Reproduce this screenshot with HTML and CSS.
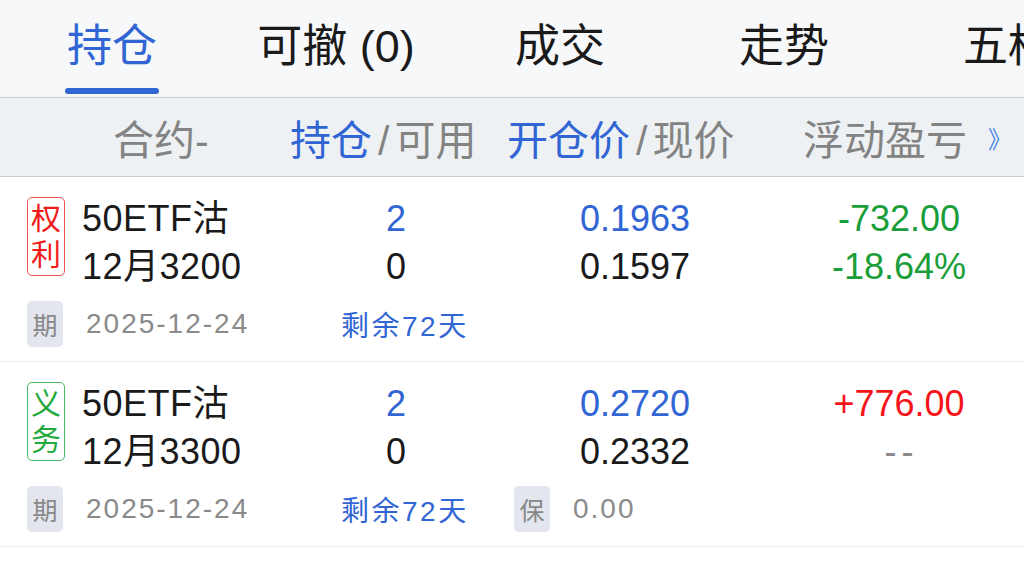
FILE: index.html
```html
<!DOCTYPE html>
<html lang="zh-CN">
<head>
    <meta charset="UTF-8">
    <meta name="viewport" content="width=device-width, initial-scale=1.0">
    <title>持仓</title>
    <link rel="stylesheet" href="styles.css">
</head>
<body>
    <!-- Tabs -->
    <nav class="tabs">
        <div class="tab active"><span class="tab-label">持仓</span><span class="tab-line"></span></div>
        <div class="tab"><span class="tab-label">可撤 (0)</span></div>
        <div class="tab"><span class="tab-label">成交</span></div>
        <div class="tab"><span class="tab-label">走势</span></div>
        <div class="tab"><span class="tab-label">五档</span></div>
    </nav>

    <!-- Column header -->
    <div class="thead">
        <div class="th th-name">合约-</div>
        <div class="th"><span class="blue">持仓</span><span class="slash">/</span>可用</div>
        <div class="th"><span class="blue">开仓价</span><span class="slash">/</span>现价</div>
        <div class="th th-last"><span>浮动盈亏</span><span class="more">》</span></div>
    </div>

    <!-- Positions -->
    <div class="pos">
        <div class="pos-main">
            <div class="col-name">
                <span class="tag tag-right">权<br>利</span>
                <div class="name">
                    <div>50ETF沽</div>
                    <div>12月3200</div>
                </div>
            </div>
            <div class="col-num"><div class="blue">2</div><div>0</div></div>
            <div class="col-num"><div class="blue">0.1963</div><div>0.1597</div></div>
            <div class="col-num"><div class="green">-732.00</div><div class="green">-18.64%</div></div>
        </div>
        <div class="pos-sub">
            <div class="sub-cell sub-first"><span class="badge">期</span><span class="sub-val">2025-12-24</span></div>
            <div class="sub-cell sub-days"><span class="days">剩余72天</span></div>
            <div class="sub-cell"></div>
        </div>
    </div>

    <div class="pos">
        <div class="pos-main">
            <div class="col-name">
                <span class="tag tag-duty">义<br>务</span>
                <div class="name">
                    <div>50ETF沽</div>
                    <div>12月3300</div>
                </div>
            </div>
            <div class="col-num"><div class="blue">2</div><div>0</div></div>
            <div class="col-num"><div class="blue">0.2720</div><div>0.2332</div></div>
            <div class="col-num"><div class="red">+776.00</div><div class="dash">--</div></div>
        </div>
        <div class="pos-sub">
            <div class="sub-cell sub-first"><span class="badge">期</span><span class="sub-val">2025-12-24</span></div>
            <div class="sub-cell sub-days"><span class="days">剩余72天</span></div>
            <div class="sub-cell sub-margin"><span class="badge">保</span><span class="sub-val">0.00</span></div>
        </div>
    </div>
</body>
</html>
```

FILE: styles.css
```css
body {
    margin: 0;
    padding: 0;
    background: #ffffff;
    font-family: "Liberation Sans", "Noto Sans CJK SC", sans-serif;
    color: #1a1a1a;
    overflow: hidden;
}
.blue {
    color: #3165d4;
}
.green {
    color: #1a9e3a;
}
.red {
    color: #f5141a;
}

/* tabs */
.tabs {
    display: flex;
    height: 97px;
    background: #f6f8fa;
    overflow: hidden;
    white-space: nowrap;
}
.tab {
    flex: 0 0 224px;
    display: flex;
    flex-direction: column;
    align-items: center;
    padding-top: 20px;
    box-sizing: border-box;
}
.tab-label {
    font-size: 45px;
    line-height: 54px;
    color: #1a1a1a;
}
.tab.active .tab-label {
    color: #3165d4;
}
.tab-line {
    width: 94px;
    height: 6px;
    margin-top: 14px;
    border-radius: 3px;
    background: #3165d4;
}

/* column header */
.thead {
    display: grid;
    grid-template-columns: 290px 217px 296px 1fr;
    align-items: center;
    height: 78px;
    background: #eef1f4;
    border-top: 1px solid #c9ced6;
    border-bottom: 1px solid #c9ced6;
    font-size: 41px;
    color: #838383;
    white-space: nowrap;
}
.th-name {
    padding-left: 113px;
}
.slash {
    margin: 0 5px 0 6px;
}
.th-last {
    display: flex;
    align-items: center;
    justify-content: space-between;
    padding-right: 12px;
}
.more {
    font-size: 24px;
    color: #4f86e4;
}

/* positions */
.pos {
    padding: 18px 0 14px;
    border-bottom: 1px solid #ececf2;
}
.pos-main,
.pos-sub {
    display: grid;
    grid-template-columns: 310px 172px 306px 222px;
}
.col-name {
    display: flex;
    align-items: flex-start;
    padding-left: 27px;
}
.tag {
    box-sizing: border-box;
    width: 38px;
    height: 79px;
    margin-top: 2px;
    margin-right: 17px;
    border: 1px solid;
    border-radius: 5px;
    font-size: 30px;
    line-height: 36px;
    text-align: center;
    padding-top: 3px;
}
.tag-right {
    color: #f01a1a;
    border-color: #f05050;
}
.tag-duty {
    color: #1faa3c;
    border-color: #4cbb63;
}
.name div,
.col-num div {
    font-size: 36px;
    line-height: 48px;
    white-space: nowrap;
}
.name div {
    letter-spacing: 0.5px;
}
.col-num {
    text-align: center;
}
.dash {
    color: #8a8a8a;
    letter-spacing: 5px;
    padding-left: 5px;
}

.pos-sub {
    margin-top: 10px;
    height: 46px;
}
.sub-cell {
    display: flex;
    align-items: center;
    white-space: nowrap;
}
.sub-first {
    padding-left: 27px;
}
.sub-days {
    padding-left: 31px;
}
.sub-margin {
    padding-left: 32px;
}
.badge {
    width: 36px;
    height: 46px;
    border-radius: 5px;
    background: #e3e6ee;
    color: #888888;
    font-size: 25px;
    display: flex;
    align-items: center;
    justify-content: center;
    margin-right: 23px;
}
.sub-val {
    color: #8a8a8a;
    font-size: 28px;
    letter-spacing: 2px;
}
.days {
    color: #3165d4;
    font-size: 28px;
    letter-spacing: 2.5px;
}
```
